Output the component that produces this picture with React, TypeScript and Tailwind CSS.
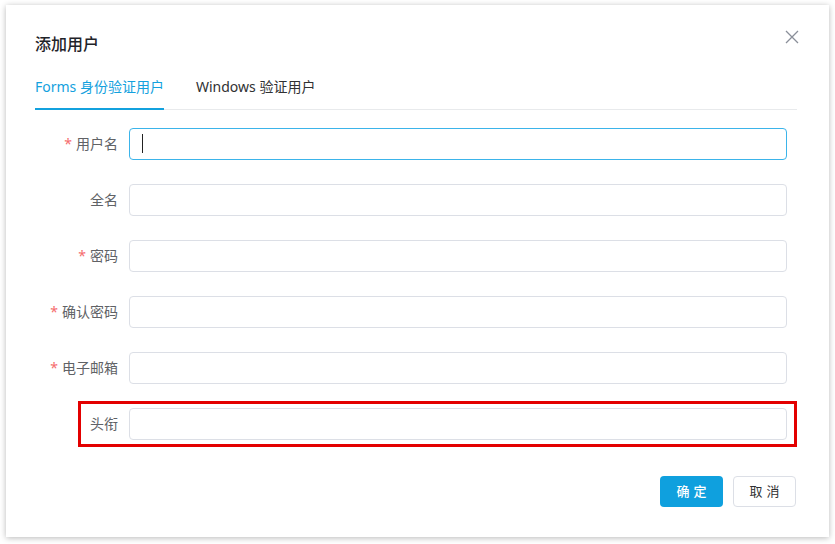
const fields = [
  { label: "用户名", required: true, focused: true },
  { label: "全名", required: false },
  { label: "密码", required: true },
  { label: "确认密码", required: true },
  { label: "电子邮箱", required: true },
  { label: "头衔", required: false, marked: true },
];

const FormRow = ({
  label,
  required,
  focused,
  marked,
}: {
  label: string;
  required: boolean;
  focused?: boolean;
  marked?: boolean;
}) => {
  return (
    <div className="relative flex items-center h-8">
      <label className="w-[83px] shrink-0 text-right text-sm text-[#606266]">
        {required && <span className="text-[#f56c6c] mr-1">*</span>}
        {label}
      </label>
      <div className="relative ml-[11px] flex-1 h-8">
        <input
          className={`w-full h-8 rounded-[4px] border bg-white px-3 text-sm outline-none ${
            focused ? "border-[#3bb4ea]" : "border-[#dcdfe6]"
          }`}
        />
        {focused && (
          <span className="absolute left-[13px] top-[6px] h-[19px] w-px bg-[#222]" />
        )}
      </div>
      {marked && (
        <div className="pointer-events-none absolute left-[43px] -right-[10px] -top-[7px] -bottom-[7px] border-[3px] border-[#e30000]" />
      )}
    </div>
  );
};

export default function App() {
  return (
    <div
      className="w-[835px] h-[544px] bg-white pt-[5px] pl-[6px]"
      style={{ fontFamily: '"Noto Sans", "Noto Sans CJK SC", sans-serif' }}
    >
      <div className="w-[823px] h-[532px] bg-white shadow-[0_1px_6px_rgba(0,0,0,0.28)] pl-[29px] pr-[32px] flex flex-col">
        <div className="flex items-start justify-between pt-[28px]">
          <h2 className="text-base font-medium text-[#1f2329] leading-[22px]">
            添加用户
          </h2>
          <button className="mt-[-3px] mr-[-2px] text-[#8a8f99]">
            <svg width="14" height="14" viewBox="0 0 14 14" fill="none">
              <path d="M1 1 L13 13 M13 1 L1 13" stroke="currentColor" strokeWidth="1.3" />
            </svg>
          </button>
        </div>

        <div className="mt-[22px] flex border-b border-[#e8eaec] text-sm">
          <div className="relative pb-[12px] text-[#13a1de] leading-[20px]">
            Forms 身份验证用户
            <span className="absolute left-0 right-0 -bottom-px h-[2px] bg-[#13a1de]" />
          </div>
          <div className="ml-8 pb-[12px] text-[#303133] leading-[20px]">
            Windows 验证用户
          </div>
        </div>

        <div className="mt-[18px] mr-[10px] flex flex-col gap-6">
          {fields.map((f) => (
            <FormRow key={f.label} {...f} />
          ))}
        </div>

        <div className="mt-9 flex justify-end gap-[10px] pr-px">
          <button className="w-[63px] h-[31px] rounded-[4px] bg-[#0fa0de] text-[13px] font-medium text-white tracking-[4px] pl-1">
            确定
          </button>
          <button className="w-[63px] h-[31px] rounded-[4px] border border-[#dcdfe6] bg-white text-[13px] text-[#303133] tracking-[4px] pl-1">
            取消
          </button>
        </div>
      </div>
    </div>
  );
}
